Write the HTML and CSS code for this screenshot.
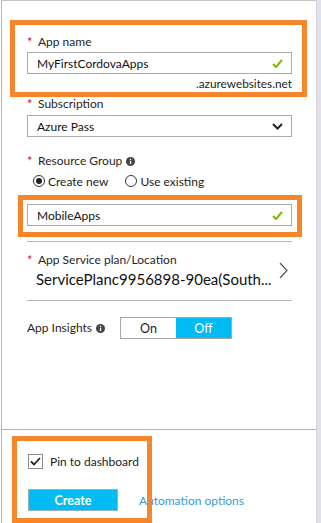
FILE: index.html
```html
<!DOCTYPE html>
<html lang="en">
<head>
    <meta charset="UTF-8">
    <meta name="viewport" content="width=device-width, initial-scale=1.0">
    <title>Web App + Mobile</title>
    <link rel="stylesheet" href="styles.css">
</head>
<body>
    <div class="screen">
        <div class="blade">
            <div class="blade-body">
                <div class="field">
                    <div class="label"><span class="req">*</span>App name</div>
                    <div class="input">
                        <span>MyFirstCordovaApps</span>
                        <svg class="check" width="11" height="9" viewBox="0 0 11 9"><path d="M1 5 L4 8 L10 1" fill="none" stroke="#7fba00" stroke-width="2"/></svg>
                    </div>
                    <div class="suffix">.azurewebsites.net</div>
                </div>

                <div class="field field-sub">
                    <div class="label"><span class="req">*</span>Subscription</div>
                    <div class="input select">
                        <span>Azure Pass</span>
                        <svg width="11" height="7" viewBox="0 0 11 7"><path d="M1 1 L5.5 5.5 L10 1" fill="none" stroke="#222" stroke-width="2"/></svg>
                    </div>
                </div>

                <div class="field field-group">
                    <div class="label"><span class="req">*</span>Resource Group
                        <svg class="info" width="9" height="9" viewBox="0 0 9 9"><circle cx="4.5" cy="4.5" r="4.5" fill="#444"/><rect x="3.9" y="3.7" width="1.3" height="3.4" fill="#fff"/><rect x="3.9" y="1.8" width="1.3" height="1.2" fill="#fff"/></svg>
                    </div>
                    <div class="radios">
                        <span class="radio checked"><i></i>Create new</span>
                        <span class="radio"><i></i>Use existing</span>
                    </div>
                    <div class="input">
                        <span>MobileApps</span>
                        <svg class="check" width="11" height="9" viewBox="0 0 11 9"><path d="M1 5 L4 8 L10 1" fill="none" stroke="#7fba00" stroke-width="2"/></svg>
                    </div>
                </div>

                <div class="picker">
                    <div>
                        <div class="label"><span class="req">*</span>App Service plan/Location</div>
                        <div class="picker-value">ServicePlanc9956898-90ea(South...</div>
                    </div>
                    <svg width="9" height="17" viewBox="0 0 9 17"><path d="M1 1 L8 8.5 L1 16" fill="none" stroke="#555" stroke-width="1.2"/></svg>
                </div>

                <div class="insights">
                    <div class="label">App Insights
                        <svg class="info" width="9" height="9" viewBox="0 0 9 9"><circle cx="4.5" cy="4.5" r="4.5" fill="#444"/><rect x="3.9" y="3.7" width="1.3" height="3.4" fill="#fff"/><rect x="3.9" y="1.8" width="1.3" height="1.2" fill="#fff"/></svg>
                    </div>
                    <div class="toggle">
                        <span>On</span>
                        <span class="on">Off</span>
                    </div>
                </div>
            </div>

            <div class="blade-footer">
                <div class="pin">
                    <span class="checkbox">
                        <svg width="11" height="9" viewBox="0 0 11 9"><path d="M1 4.5 L4 7.5 L10 1" fill="none" stroke="#222" stroke-width="1.8"/></svg>
                    </span>
                    Pin to dashboard
                </div>
                <div class="actions">
                    <button class="create">Create</button>
                    <a class="link" href="#">Automation options</a>
                </div>
            </div>
        </div>
        <div class="edge"></div>

        <div class="callout callout-name"></div>
        <div class="callout callout-group"></div>
        <div class="callout callout-pin"></div>
    </div>
</body>
</html>
```

FILE: styles.css
```css
body {
    margin: 0;
    padding: 0;
    background-color: #fff;
    font-family: 'Lato', 'Open Sans', sans-serif;
    font-size: 12px;
    color: #222;
}

.screen {
    position: relative;
    display: flex;
    width: 321px;
    height: 523px;
    overflow: hidden;
}

.blade {
    flex: 1;
    margin-left: 1px;
    border-top: 1px solid #c4c4c4;
    border-left: 1px solid #b8b8b8;
    border-right: 1px solid #d6d6dc;
    display: flex;
    flex-direction: column;
}

.edge {
    width: 4px;
    background-color: #e0e1e9;
}

.blade-body {
    flex: 1;
    padding: 32px 24px 0 25px;
}

.label {
    height: 18px;
    line-height: 18px;
    color: #252525;
    display: flex;
    align-items: center;
}

.req {
    color: #e0102a;
    width: 11px;
    font-size: 13px;
}

.info {
    margin-left: 4px;
}

.input {
    height: 20px;
    border: 1px solid #ababab;
    margin-top: 1px;
    padding: 0 8px 0 9px;
    display: flex;
    align-items: center;
    justify-content: space-between;
    color: #111;
}

.suffix {
    text-align: right;
    font-size: 11.8px;
    line-height: 16px;
    margin-top: 2px;
}

.field-sub {
    margin-top: 3px;
}

.field-sub .input {
    margin-top: 2px;
}

.field-group {
    margin-top: 15px;
}

.radios {
    display: flex;
    gap: 17px;
    height: 18px;
    margin: 2px 0 14px 6px;
    align-items: center;
}

.radio {
    display: flex;
    align-items: center;
    gap: 3px;
}

.radio i {
    width: 12px;
    height: 12px;
    border: 1px solid #333;
    border-radius: 50%;
    box-sizing: border-box;
    display: inline-block;
    position: relative;
}

.radio.checked i::after {
    content: '';
    position: absolute;
    left: 2px;
    top: 2px;
    width: 6px;
    height: 6px;
    border-radius: 50%;
    background-color: #222;
}

.picker {
    margin-top: 15px;
    border-top: 1px solid #b4b4b4;
    border-bottom: 1px solid #b4b4b4;
    padding: 9px 4px 11px 0;
    display: flex;
    justify-content: space-between;
    align-items: center;
}

.picker-value {
    font-size: 15px;
    line-height: 20px;
    padding-left: 9px;
    color: #111;
}

.insights {
    display: flex;
    align-items: center;
    margin-top: 16px;
}

.insights .label {
    width: 93px;
}

.toggle {
    display: flex;
    border: 1px solid #a8a8a8;
    height: 20px;
}

.toggle span {
    width: 55px;
    display: flex;
    align-items: center;
    justify-content: center;
    font-size: 12.5px;
}

.toggle .on {
    background-color: #00bcf2;
    color: #fff;
}

.blade-footer {
    border-top: 1px solid #b4b4b4;
    height: 94px;
    padding: 23px 0 0 26px;
    box-sizing: border-box;
}

.pin {
    display: flex;
    align-items: center;
    gap: 7px;
    height: 16px;
}

.checkbox {
    width: 15px;
    height: 15px;
    border: 1px solid #8c8c8c;
    box-sizing: border-box;
    display: flex;
    align-items: center;
    justify-content: center;
}

.actions {
    display: flex;
    align-items: center;
    margin-top: 20px;
}

.create {
    width: 90px;
    height: 22px;
    background-color: #00bcf2;
    border: 1px solid #8fb3c2;
    color: #fff;
    font-family: 'Lato', 'Open Sans', sans-serif;
    font-size: 12.5px;
    font-weight: 700;
    padding: 0;
}

.link {
    margin-left: 21px;
    color: #3a9ad9;
    text-decoration: none;
}

.callout {
    position: absolute;
    border: 5px solid #f6862c;
    box-sizing: border-box;
}

.callout-name {
    left: 10px;
    top: 20px;
    width: 297px;
    height: 77px;
}

.callout-group {
    left: 18px;
    top: 195px;
    width: 284px;
    height: 42px;
}

.callout-pin {
    left: 12px;
    top: 436px;
    width: 140px;
    height: 87px;
}
```
